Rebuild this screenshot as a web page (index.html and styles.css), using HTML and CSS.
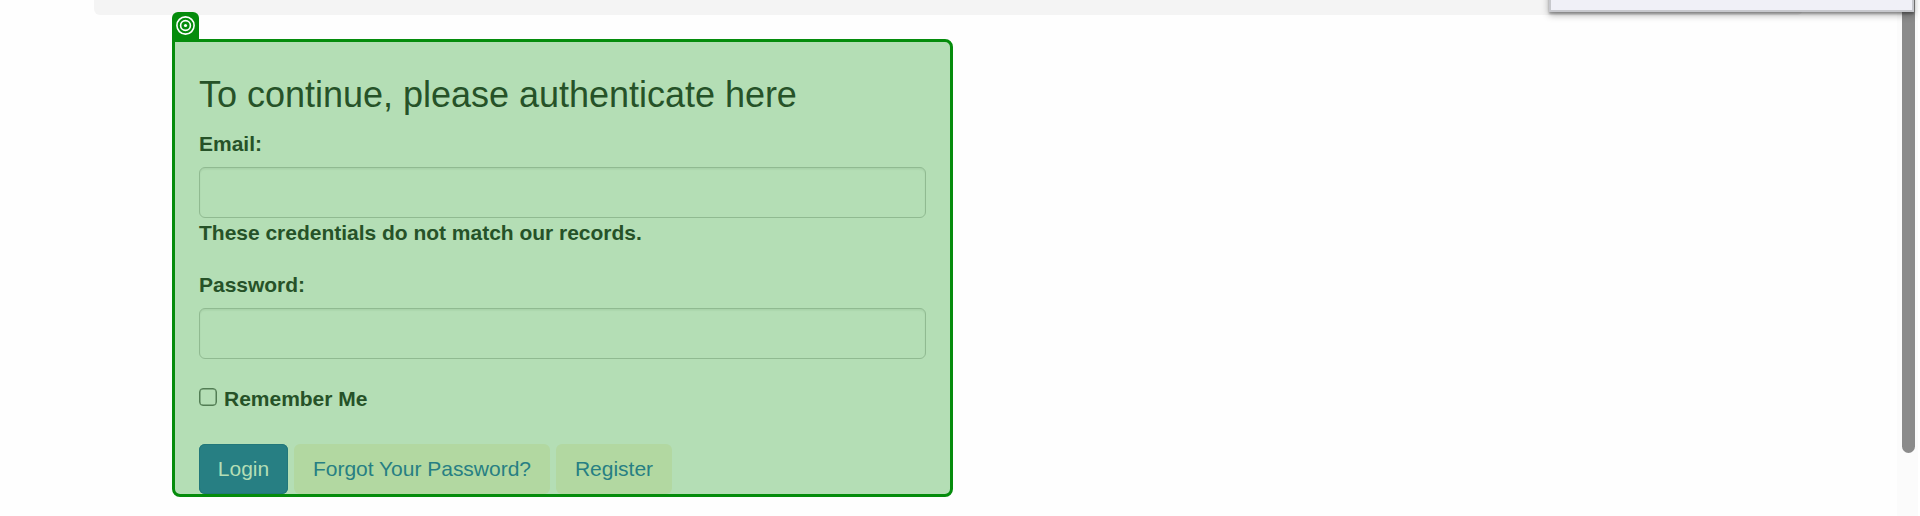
FILE: index.html
```html
<!DOCTYPE html>
<html lang="en">
<head>
<meta charset="utf-8">
<title>Login</title>
<link rel="stylesheet" href="styles.css">
</head>
<body>
<div class="page">
  <div class="banner"></div>
  <main class="highlight">
    <span class="tab">
      <svg width="19" height="19" viewBox="0 0 19 19" fill="none" stroke="#fff">
        <circle cx="9.5" cy="9.5" r="8.6" stroke-width="1.6"/>
        <circle cx="9.5" cy="9.5" r="4.9" stroke-width="1.6"/>
        <circle cx="9.5" cy="9.5" r="1.6" fill="#fff" stroke="none"/>
      </svg>
    </span>
    <h1 class="title">To continue, please authenticate here</h1>
    <form class="form">
      <div class="field">
        <label class="label" for="email">Email:</label>
        <input class="input" id="email" type="text">
        <strong class="error">These credentials do not match our records.</strong>
      </div>
      <div class="field">
        <label class="label" for="password">Password:</label>
        <input class="input" id="password" type="password">
      </div>
      <label class="remember"><input class="check" type="checkbox"><span>Remember Me</span></label>
      <div class="actions">
        <button class="btn btn-primary" type="button">Login</button>
        <a class="btn btn-forgot">Forgot Your Password?</a>
        <a class="btn btn-register">Register</a>
      </div>
    </form>
  </main>
</div>
<div class="scrollbar"><div class="thumb"></div></div>
<div class="popup"></div>
</body>
</html>
```
FILE: styles.css
```css
* { box-sizing: border-box; }
body {
  margin: 0;
  height: 516px;
  display: flex;
  overflow: hidden;
  position: relative;
  background: #fefefe;
  font: 21px/30px "Liberation Sans", Arial, sans-serif;
  letter-spacing: -0.015px;
  color: #265228;
}
.page { flex: 1; }
.banner {
  height: 15px;
  margin: 0 94px 24px;
  background: #f4f4f4;
  border-radius: 0 0 6px 6px;
}
.highlight {
  position: relative;
  width: 781px;
  height: 458px;
  margin-left: 172px;
  padding: 33px 24px 0;
  border: 3px solid #058c0c;
  border-radius: 0 8px 8px 8px;
  background: #b4deb5;
}
.tab {
  position: absolute;
  left: -3px;
  top: -30px;
  width: 27px;
  height: 28px;
  padding: 4px;
  border-radius: 6px 6px 0 0;
  background: #058c0c;
}
.tab svg { display: block; }
.title {
  margin: 0 0 14px;
  font-size: 36px;
  line-height: 40px;
  font-weight: 400;
}
.form { display: flex; flex-direction: column; }
.field { display: flex; flex-direction: column; }
.field + .field { margin-top: 22px; }
.label { margin-bottom: 8px; font-weight: 700; }
.input {
  width: 727px;
  height: 51px;
  border: 1px solid #90ba91;
  border-radius: 6px;
  background: transparent;
  box-shadow: inset 0 1.5px 1.5px rgba(0, 60, 0, .07);
}
.remember {
  display: flex;
  gap: 7px;
  margin-top: 25px;
  font-weight: 700;
}
.check {
  appearance: none;
  width: 18px;
  height: 18px;
  margin: 4px 0 0;
  border: 1px solid #527d54;
  border-radius: 4px;
  box-shadow: inset 0 0 0 .5px #527d54;
}
.actions { display: flex; gap: 6px; margin-top: 30px; }
.btn {
  height: 50px;
  padding: 0;
  border: 0;
  border-radius: 6px;
  font: inherit;
  line-height: 50px;
  text-align: center;
  color: #277f83;
  background: #b2d8a1;
}
.btn-primary {
  width: 89px;
  color: #b4deb5;
  background: #277f83;
  box-shadow: inset 0 0 0 1px #22777a;
}
.btn-forgot { width: 256px; }
.btn-register { width: 116px; }
.scrollbar {
  width: 23px;
  padding: 0 5px;
  background: #fbfbfb;
  border-right: 2px solid #fff;
}
.thumb {
  width: 13px;
  height: 453px;
  border-radius: 0 0 7px 7px;
  background: #8b8b8b;
}
.popup {
  position: absolute;
  left: 1549px;
  top: -20px;
  width: 365px;
  height: 32px;
  border: 2px solid #c7c8cd;
  background: #f0f0f7;
  box-shadow: 0 2px 2px rgba(0, 0, 0, .28), 0 3px 7px rgba(0, 0, 0, .3);
}
```
